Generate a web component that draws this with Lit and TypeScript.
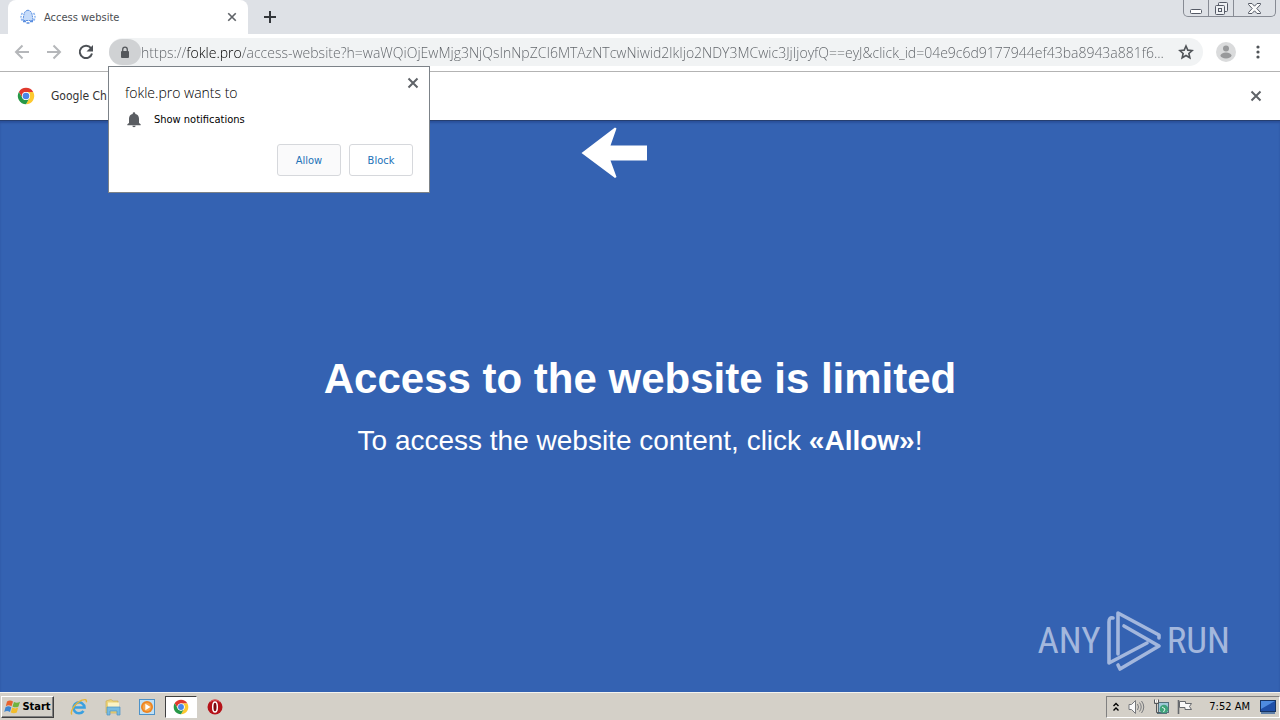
import { LitElement, html, css, svg } from "lit";
import { customElement, property } from "lit/decorators.js";

const URL_TEXT =
  "https://fokle.pro/access-website?h=waWQiOjEwMjg3NjQsInNpZCI6MTAzNTcwNiwid2lkIjo2NDY3MCwic3JjIjoyfQ==eyJ&click_id=04e9c6d9177944ef43ba8943a881f6...";

const chromeLogo = svg`
  <circle cx="12" cy="12" r="11" fill="#fff"/>
  <path d="M12 1a11 11 0 0 1 9.6 5.6H12a5.4 5.4 0 0 0-4.700 8.100L2.5 6.5A11 11 0 0 1 12 1z" fill="#e0392d"/>
  <path d="M21.6 6.6A11 11 0 0 1 12 23l4.7-8.3A5.4 5.4 0 0 0 12 6.6z" fill="#fdc92f"/>
  <path d="M2.5 6.5l4.8 8.2a5.4 5.4 0 0 0 9.4 0L12 23A11 11 0 0 1 2.5 6.5z" fill="#279847"/>
  <circle cx="12" cy="12" r="5.400" fill="#fff"/>
  <circle cx="12" cy="12" r="4.400" fill="#4a86e8"/>`;

const shared = css`
  :host {
    display: block;
    font-family: "DejaVu Sans Condensed", "Noto Sans", sans-serif;
  }
  * {
    box-sizing: border-box;
  }
  svg {
    display: block;
    flex: none;
  }
  button {
    display: flex;
    align-items: center;
    justify-content: center;
    flex: none;
    margin: 0;
    padding: 0;
    border: 0;
    background: none;
    font-family: inherit;
    color: inherit;
  }
`;

@customElement("close-button")
class CloseButton extends LitElement {
  @property() label = "Close";
  @property({ type: Number }) size = 12;
  static styles = [shared];
  render() {
    return html`<button aria-label=${this.label}>
      <svg width=${this.size} height=${this.size} viewBox="0 0 12 12" fill="none" stroke="#5f6368" stroke-width="2">
        <path d="M1.5 1.5l9 9M10.5 1.5l-9 9" />
      </svg>
    </button>`;
  }
}

@customElement("tab-strip")
class TabStrip extends LitElement {
  static styles = [
    shared,
    css`
      .strip {
        display: flex;
        height: 34px;
        padding-left: 8px;
        background: #dee1e6;
      }
      .tab {
        display: flex;
        align-items: center;
        gap: 8px;
        width: 240px;
        padding: 0 11px 0 12px;
        border-radius: 8px 8px 0 0;
        background: #fff;
        font-size: 11px;
        color: #4a4d51;
      }
      .title {
        flex: 1;
      }
      .add {
        width: 44px;
      }
      .window {
        display: flex;
        height: 17px;
        margin: 0 4px 0 auto;
        border: 1px solid #878b94;
        border-top: 0;
        border-radius: 0 0 5px 5px;
      }
      .window button {
        width: 25px;
        border-right: 1px solid #878b94;
      }
      .window button:last-child {
        width: 41px;
        border: 0;
      }
    `,
  ];
  render() {
    return html`<div class="strip">
      <div class="tab">
        <svg width="16" height="16" viewBox="0 0 16 16">
          <path d="M2.5 4Q-.5 8 2.5 12M13.5 4q3 4 0 8" fill="none" stroke="#8ab4f0" stroke-width="1.500" stroke-dasharray="2 1" />
          <path d="M8 1.200c-3 .4-4 2.800-4.200 5L2.800 11.500h10.400l-1-5.300C12 4 11 1.600 8 1.200z" fill="#c5dbfa" stroke="#5b8fe0" stroke-dasharray="2 .6" />
          <path d="M3 12.500h3M10 12.500h3M6.500 14h3" stroke="#5b8fe0" stroke-width="1.500" />
        </svg>
        <span class="title">Access website</span>
        <close-button label="Close tab" size="10"></close-button>
      </div>
      <button class="add" aria-label="New tab">
        <svg width="12" height="12" viewBox="0 0 12 12"><path d="M6 0v12M0 6h12" stroke="#33363b" stroke-width="2" /></svg>
      </button>
      <div class="window">
        <button aria-label="Minimize">
          <svg width="13" height="12" viewBox="0 0 13 12"><rect x=".5" y="7.500" width="11" height="4" rx="1" fill="#fff" stroke="#555a66" /></svg>
        </button>
        <button aria-label="Restore">
          <svg width="13" height="13" viewBox="0 0 13 13" fill="#eef0f3" stroke="#555a66">
            <rect x="3.500" y=".5" width="9" height="9" rx="1" />
            <rect x=".5" y="3.500" width="9" height="9" rx="1" />
            <rect x="3.500" y="6.500" width="3" height="3" />
          </svg>
        </button>
        <button aria-label="Close window">
          <svg width="13" height="11" viewBox="0 0 13 11">
            <path d="M.5.5h3.500l2.500 2.700L9 .5h3.500v1L8.800 5.500l3.700 4v1H9L6.500 7.800 4 10.500H.5v-1l3.700-4L.5 1.500z" fill="#fafafa" stroke="#555a66" />
          </svg>
        </button>
      </div>
    </div>`;
  }
}

@customElement("address-row")
class AddressRow extends LitElement {
  static styles = [
    shared,
    css`
      .row {
        display: flex;
        align-items: center;
        height: 38px;
        padding: 0 12px 1px 14px;
        border-bottom: 1px solid #b3b3b3;
        background: #fff;
      }
      .nav {
        display: flex;
        gap: 16px;
        margin-right: 15px;
      }
      .box {
        display: flex;
        flex: 1;
        align-items: center;
        min-width: 0;
        height: 28px;
        padding-right: 9px;
        border-radius: 14px;
        background: #f1f3f4;
      }
      .lock {
        width: 32px;
        height: 26px;
        border-radius: 13px;
        background: #d0d2d4;
      }
      .url {
        flex: 1;
        min-width: 0;
        height: 28px;
        margin: 0;
        padding: 0;
        border: 0;
        outline: 0;
        font-family: "Open Sans", "Noto Sans", sans-serif;
        font-size: 14px;
        font-weight: 300;
        color: transparent;
        background: linear-gradient(90deg, #5d6166 46px, #000 46px, #000 101px, #5d6166 101px);
        -webkit-background-clip: text;
        background-clip: text;
      }
      .tools {
        display: flex;
        align-items: center;
        gap: 12px;
        padding-left: 13px;
      }
    `,
  ];
  render() {
    return html`<div class="row">
      <div class="nav">
        <button aria-label="Back">
          <svg width="16" height="16" viewBox="0 0 16 16" fill="none" stroke="#b5b7ba" stroke-width="2"><path d="M15 8H2M8.500 1.500L2 8l6.500 6.500" /></svg>
        </button>
        <button aria-label="Forward">
          <svg width="16" height="16" viewBox="0 0 16 16" fill="none" stroke="#b5b7ba" stroke-width="2"><path d="M1 8h13M7.500 1.500L14 8l-6.500 6.500" /></svg>
        </button>
        <button aria-label="Reload">
          <svg width="16" height="16" viewBox="0 0 16 16"><path d="M13 4.200A6.200 6.200 0 1 0 14 9.500" fill="none" stroke="#4d5156" stroke-width="2" /><path d="M15 1v6.500H8.500z" fill="#4d5156" /></svg>
        </button>
      </div>
      <div class="box">
        <button class="lock" aria-label="Site information">
          <svg width="10" height="13" viewBox="0 0 10 13"><rect x="1" y="5" width="8" height="7" rx="1" fill="#54575b" /><path d="M2.700 5.500V3.500a2.300 2.300 0 0 1 4.600 0v2" fill="none" stroke="#54575b" stroke-width="1.300" /></svg>
        </button>
        <input class="url" aria-label="Address" .value=${URL_TEXT} />
        <button aria-label="Bookmark this page">
          <svg width="16" height="16" viewBox="0 0 24 24"><path d="M12 3l2.700 6.200 6.600.6-5 4.400 1.500 6.500L12 17.300l-5.800 3.400 1.500-6.500-5-4.400 6.600-.6z" fill="none" stroke="#505458" stroke-width="2.400" /></svg>
        </button>
      </div>
      <div class="tools">
        <button aria-label="Profile">
          <svg width="20" height="20" viewBox="0 0 20 20"><circle cx="10" cy="10" r="10" fill="#dadbdc" /><circle cx="10" cy="6.500" r="3" fill="#98999b" /><ellipse cx="10" cy="13.500" rx="5.500" ry="3" fill="#98999b" /></svg>
        </button>
        <button aria-label="Menu">
          <svg width="20" height="16" viewBox="0 0 20 16" fill="#505458"><circle cx="10" cy="3" r="1.600" /><circle cx="10" cy="8" r="1.600" /><circle cx="10" cy="13" r="1.600" /></svg>
        </button>
      </div>
    </div>`;
  }
}

@customElement("permission-popup")
class PermissionPopup extends LitElement {
  static styles = [
    shared,
    css`
      .popup {
        display: flex;
        flex-direction: column;
        width: 322px;
        padding: 10px 16px 16px;
        border: 1px solid #7c8288;
        background: #fff;
        color: #202124;
      }
      .head {
        display: flex;
        align-items: flex-start;
        justify-content: space-between;
        margin-right: -6px;
      }
      .site {
        margin: 7px 0 0;
        font-family: "Open Sans", "Noto Sans", sans-serif;
        font-size: 14px;
        font-weight: 300;
        line-height: 18px;
        color: #000;
      }
      .perm {
        display: flex;
        align-items: center;
        gap: 12px;
        margin: 9px 0 15px;
        padding-left: 1px;
        font-size: 11px;
        line-height: 18px;
        color: #000;
      }
      .actions {
        display: flex;
        justify-content: flex-end;
        gap: 8px;
      }
      .actions button {
        width: 64px;
        height: 32px;
        border: 1px solid #d6d8dc;
        border-radius: 3px;
        font-size: 11px;
        color: #2272b8;
      }
      .actions .first {
        background: #fafafb;
      }
    `,
  ];
  render() {
    return html`<div class="popup" role="dialog" aria-label="Permission request">
      <div class="head">
        <h2 class="site">fokle.pro wants to</h2>
        <close-button></close-button>
      </div>
      <div class="perm">
        <svg width="16" height="16" viewBox="0 0 24 24" fill="#5a5d62"><path d="M12 23c1.400 0 2.500-1 2.500-2.200h-5C9.500 22 10.600 23 12 23zm7.500-6.500V10c0-3.600-2-6.300-5.500-7V2.500a2 2 0 0 0-4 0V3c-3.500.7-5.500 3.400-5.500 7v6.500l-2.500 2V20h20v-1.500z" /></svg>
        <span>Show notifications</span>
      </div>
      <div class="actions">
        <button class="first">Allow</button>
        <button>Block</button>
      </div>
    </div>`;
  }
}

@customElement("task-bar")
class TaskBar extends LitElement {
  static styles = [
    shared,
    css`
      .bar {
        display: flex;
        align-items: center;
        height: 28px;
        padding: 0 0 0 1px;
        border-top: 1px solid #f4f3f0;
        background: #d4d0c8;
        color: #000;
      }
      .start {
        gap: 1px;
        width: 53px;
        height: 22px;
        border: 1px solid;
        border-color: #fff #404040 #404040 #fff;
        box-shadow: inset -1px -1px #808080;
        font-size: 11px;
        font-weight: 700;
      }
      .apps {
        display: flex;
        align-items: center;
        margin-left: 8px;
      }
      .apps button {
        width: 34px;
        height: 22px;
      }
      .apps .active {
        width: 32px;
        margin: 0 1px;
        border: 1px solid;
        border-color: #404040 #fff #fff #404040;
        background: #fff;
      }
      .tray {
        display: flex;
        align-items: center;
        gap: 8px;
        height: 22px;
        margin-left: auto;
        padding: 0 3px 0 5px;
        border: 1px solid;
        border-color: #808080 #fff #fff #808080;
        font-size: 11px;
      }
      .time {
        padding: 0 2px 0 8px;
      }
    `,
  ];
  render() {
    return html`<div class="bar">
      <button class="start">
        <svg width="17" height="16" viewBox="0 0 17 16">
          <path d="M3 2.500q3-2 6 0L7.500 7.200q-3-1.800-5.700 0z" fill="#e8622c" />
          <path d="M10 3q3 1.600 6-.3L14.500 7.500q-3 1.700-6 0z" fill="#6fb33f" />
          <path d="M1.500 8.200q3-1.800 5.800 0L6 13q-3-1.800-5.800 0z" fill="#3d85d0" />
          <path d="M8.200 8.600q3 1.600 6 0L12.800 13.400q-3 1.600-6 0z" fill="#f2bd2c" />
        </svg>
        <span>Start</span>
      </button>
      <div class="apps">
        <button aria-label="Internet Explorer">
          <svg width="18" height="18" viewBox="0 0 18 18" fill="none">
            <path d="M4.500 9.500h10A5.500 5.500 0 1 0 13.500 13" stroke="#3aa0e0" stroke-width="2.600" />
            <path d="M2 16.500C-.5 14 5 5 12 2.200c3-1.200 5-.7 4.300 2" stroke="#e5b53b" stroke-width="1.400" />
          </svg>
        </button>
        <button aria-label="Explorer">
          <svg width="18" height="18" viewBox="0 0 18 18">
            <path d="M2 3l5-1.500 2 1.500h5v12H2z" fill="#ecd37a" stroke="#c9a94a" stroke-width=".6" />
            <path d="M4 4.500h11v5H4z" fill="#fbf3c5" />
            <path d="M3 9h13v8h-3v-4H6v4H3z" fill="#78bce0" stroke="#4b93c4" stroke-width=".7" />
          </svg>
        </button>
        <button aria-label="Media Player">
          <svg width="18" height="18" viewBox="0 0 18 18">
            <rect x="1.500" y="1.500" width="15" height="15" fill="#bfe0f5" stroke="#4d92c8" />
            <circle cx="9" cy="9" r="6" fill="#ee8420" /><circle cx="9" cy="9" r="4.300" fill="#f6a54a" />
            <path d="M7.300 5.800v6.400L12.500 9z" fill="#fff" />
          </svg>
        </button>
        <button class="active" aria-label="Chrome">
          <svg width="16" height="16" viewBox="0 0 24 24">${chromeLogo}</svg>
        </button>
        <button aria-label="Opera">
          <svg width="16" height="16" viewBox="0 0 16 16">
            <circle cx="8" cy="8" r="7.500" fill="#b51219" /><path d="M3 3a7 7 0 0 1 10 0" stroke="#e8666a" fill="none" />
            <ellipse cx="8" cy="8" rx="2.300" ry="5" fill="#7d0a10" stroke="#fff" stroke-width="1.500" />
          </svg>
        </button>
      </div>
      <div class="tray">
        <svg width="8" height="10" viewBox="0 0 8 10" fill="none" stroke="#000" stroke-width="1.400"><path d="M1.500 4L4 1.500 6.500 4M1.500 8.500L4 6l2.500 2.500" /></svg>
        <svg width="17" height="16" viewBox="0 0 17 16" fill="none" stroke="#77797c">
          <path d="M1 5.500h2.500l4-4v13l-4-4H1z" fill="#fafafa" /><path d="M9.500 5q2 3 0 6M11.500 3.500q3.400 4.500 0 9M13.500 2q4.500 6 0 12" />
        </svg>
        <svg width="16" height="16" viewBox="0 0 16 16">
          <rect x="5.500" y="3.500" width="10" height="10" fill="#9fc9d8" stroke="#55717c" /><circle cx="11" cy="10" r="4.300" fill="#3fa37a" /><path d="M9 8l3 2-1.500 3" stroke="#e8f6f0" fill="none" />
          <path d="M1.500.5v4h4v-4M3.500 4.500v9H7" fill="none" stroke="#55585c" /><path d="M2 1h1v2H2zM4 1h1v2H4z" fill="#fff" /><path d="M4 14.500h10" stroke="#55717c" />
        </svg>
        <svg width="16" height="16" viewBox="0 0 16 16" fill="#f8f8f8" stroke="#66696d"><path d="M1.500 1v14" stroke-width="1.600" /><path d="M2.500 2.500h6v2h6l-2 3 2 3H8v-2H2.500z" /></svg>
        <span class="time">7:52 AM</span>
        <svg width="16" height="14" viewBox="0 0 16 14"><rect x=".5" y=".5" width="15" height="11" fill="#1f4fa8" stroke="#173463" /><path d="M1 1h14L1 9z" fill="#4e8be0" /><path d="M1 13h14" stroke="#5d7ea8" stroke-width="2" /></svg>
      </div>
    </div>`;
  }
}

@customElement("app-root")
class AppRoot extends LitElement {
  static styles = [
    shared,
    css`
      .screen {
        position: relative;
        display: flex;
        flex-direction: column;
        min-height: 100vh;
      }
      .infobar {
        display: flex;
        align-items: center;
        gap: 16px;
        height: 48px;
        padding: 0 18px 0 17px;
        background: #fff;
        font-size: 12px;
        color: #333;
      }
      .infobar span {
        flex: 1;
      }
      .page {
        display: flex;
        flex: 1;
        flex-direction: column;
        align-items: center;
        padding: 6px 50px 20px;
        border-top: 1px solid #263f70;
        background: #3462b2;
        box-shadow: inset 0 2px 2px #2b519b;
        color: #fff;
        font-family: "Liberation Sans", Arial, sans-serif;
      }
      .arrow {
        padding-right: 52px;
      }
      .message {
        margin: auto 0;
        padding-top: 22px;
        text-align: center;
      }
      h1 {
        margin: 0 0 20px;
        font-size: 42px;
        line-height: 50px;
      }
      p {
        margin: 0;
        font-size: 28px;
        line-height: 34px;
      }
      .mark {
        display: flex;
        align-items: center;
        align-self: flex-end;
        gap: 5px;
        font-family: "Roboto Condensed", "Roboto", sans-serif;
        font-size: 37px;
        line-height: 62px;
        color: #a3b7dd;
      }
      .overlay {
        position: absolute;
        top: 66px;
        left: 108px;
      }
    `,
  ];
  render() {
    return html`<div class="screen">
      <tab-strip></tab-strip>
      <address-row></address-row>
      <div class="infobar">
        <svg width="18" height="18" viewBox="0 0 24 24">${chromeLogo}</svg>
        <span>Google Ch</span>
        <close-button label="Dismiss"></close-button>
      </div>
      <main class="page">
        <svg class="arrow" width="118" height="52" viewBox="0 0 66 52"><path d="M.5 26L34 .5l1.500 1-6 17H66v15H29.500l6 16.500-1.500 1z" fill="#fff" /></svg>
        <div class="message">
          <h1>Access to the website is limited</h1>
          <p>To access the website content, click <b>«Allow»</b>!</p>
        </div>
        <div class="mark">
          <span>ANY</span>
          <svg width="56" height="62" viewBox="0 0 56 62" fill="none" stroke="#a3b7dd" stroke-width="3.600" stroke-linejoin="round" stroke-linecap="round">
            <path d="M7 8Q3 7 3 12V53L41 33" />
            <path d="M12 44V3L53 25V28" />
            <path d="M18 16L53 36 14 59 12 55" />
          </svg>
          <span>RUN</span>
        </div>
      </main>
      <task-bar></task-bar>
      <permission-popup class="overlay"></permission-popup>
    </div>`;
  }
}
